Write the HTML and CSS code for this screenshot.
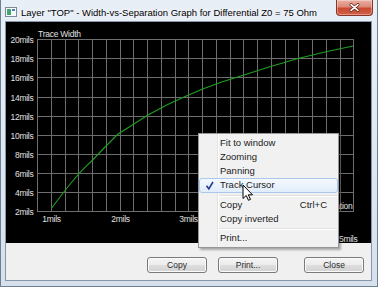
FILE: index.html
```html
<!DOCTYPE html>
<html lang="en">
<head>
    <meta charset="UTF-8">
    <title>Width-vs-Separation Graph</title>
    <link rel="stylesheet" href="styles.css">
</head>
<body>
    <div class="window">
        <!-- Title bar -->
        <div class="titlebar">
            <span class="app-icon">
                <svg width="12" height="10" viewBox="0 0 12 10">
                    <rect x="0.5" y="0.5" width="11" height="9" fill="#fbfcfd" stroke="#7d8a97"/>
                    <rect x="2" y="2" width="4" height="6" fill="#3fa86a"/>
                    <rect x="7" y="2" width="3" height="2" fill="#4a7fd0"/>
                </svg>
            </span>
            <span class="title">Layer "TOP" - Width-vs-Separation Graph for Differential Z0 = 75 Ohm</span>
            <button class="close-btn">
                <svg width="37" height="16" viewBox="0 0 37 16">
                    <path d="M15.5 4.5 L22.5 10.5 M22.5 4.5 L15.5 10.5" stroke="#5a2015" stroke-width="3.2" stroke-linecap="round"/>
                    <path d="M15.5 4.5 L22.5 10.5 M22.5 4.5 L15.5 10.5" stroke="#fff" stroke-width="1.8" stroke-linecap="round"/>
                </svg>
            </button>
        </div>

        <div class="frame-body">
            <div class="client">
                <div class="graph">
                    <svg width="365" height="221" viewBox="6 22 365 221">
                        <path class="grid" d="M37.5 39V212 M51.5 39V212 M65.5 39V212 M78.5 39V212 M92.5 39V212 M106.5 39V212 M120.5 39V212 M133.5 39V212 M147.5 39V212 M161.5 39V212 M175.5 39V212 M188.5 39V212 M202.5 39V212 M216.5 39V212 M230.5 39V212 M243.5 39V212 M257.5 39V212 M271.5 39V212 M285.5 39V212 M298.5 39V212 M312.5 39V212 M326.5 39V212 M340.5 39V212 M353.5 39V212
                            M37 39.5H354 M37 58.5H354 M37 77.5H354 M37 97.5H354 M37 116.5H354 M37 135.5H354 M37 154.5H354 M37 173.5H354 M37 192.5H354 M37 211.5H354"/>
                        <polyline class="curve" points="51.7,208 58.5,199 65.4,190 72.3,181.5 79.2,173.3 86,166.4 92.7,160 105,147 118,134 130,126.5 148,115 166.7,105 185,96.5 203.3,88.7 221.7,82.1 240,76.2 269,67 298,58.5 326,51.8 353,46"/>

                        <text class="axis" x="38" y="37">Trace Width</text>
                        <text class="axis end" x="33.5" y="42.8">20mils</text>
                        <text class="axis end" x="33.5" y="61.8">18mils</text>
                        <text class="axis end" x="33.5" y="80.8">16mils</text>
                        <text class="axis end" x="33.5" y="100.8">14mils</text>
                        <text class="axis end" x="33.5" y="119.8">12mils</text>
                        <text class="axis end" x="33.5" y="138.8">10mils</text>
                        <text class="axis end" x="33.5" y="157.8">8mils</text>
                        <text class="axis end" x="33.5" y="176.8">6mils</text>
                        <text class="axis end" x="33.5" y="195.8">4mils</text>
                        <text class="axis end" x="33.5" y="214.8">2mils</text>

                        <text class="axis mid" x="51.5" y="222">1mils</text>
                        <text class="axis mid" x="120.5" y="222">2mils</text>
                        <text class="axis mid" x="188.5" y="222">3mils</text>
                        <text class="axis mid" x="326.5" y="222">5mils</text>

                        <text class="axis end" x="352.5" y="209">Separation</text>
                        <text class="axis end" x="357.5" y="242">Y: 17.25mils</text>
                    </svg>
                </div>
                <div class="button-bar">
                    <button class="push-btn">Copy</button>
                    <button class="push-btn btn-print">Print...</button>
                    <button class="push-btn">Close</button>
                </div>
            </div>
        </div>

        <!-- Context menu over the graph -->
        <div class="context-menu">
            <div class="menu-item"><span class="check-col"></span><span class="menu-label">Fit to window</span></div>
            <div class="menu-item"><span class="check-col"></span><span class="menu-label">Zooming</span></div>
            <div class="menu-item"><span class="check-col"></span><span class="menu-label">Panning</span></div>
            <div class="menu-item hover">
                <span class="check-col">
                    <svg width="12" height="10" viewBox="0 0 12 10">
                        <path d="M2.5 4.8 L4.8 7.8 L9 1" fill="none" stroke="#1f3b94" stroke-width="1.6"/>
                    </svg>
                </span>
                <span class="menu-label">Track Cursor</span>
            </div>
            <div class="menu-sep"></div>
            <div class="menu-item"><span class="check-col"></span><span class="menu-label">Copy</span><span class="shortcut">Ctrl+C</span></div>
            <div class="menu-item"><span class="check-col"></span><span class="menu-label">Copy inverted</span></div>
            <div class="menu-sep"></div>
            <div class="menu-item"><span class="check-col"></span><span class="menu-label">Print...</span></div>
        </div>

        <svg class="mouse-cursor" width="12" height="18" viewBox="0 0 12 18">
            <path d="M1 1 L1 14.5 L4.2 11.5 L6.5 16.3 L8.5 15.4 L6.3 10.8 L10.5 10.8 Z" fill="#fff" stroke="#000" stroke-width="1" stroke-linejoin="round"/>
        </svg>
    </div>
</body>
</html>
```

FILE: styles.css
```css
body {
    margin: 0;
    padding: 0;
    font-family: "Liberation Sans", Arial, sans-serif;
    background-color: #ffffff;
}

.window {
    position: relative;
    width: 378px;
    height: 287px;
    box-sizing: border-box;
    border: 1px solid #6d7f93;
    border-top: none;
    background: linear-gradient(#e9eff6, #d6e1ed);
    display: flex;
    flex-direction: column;
    overflow: hidden;
}

/* Title bar */
.titlebar {
    height: 21px;
    box-sizing: border-box;
    padding-top: 3px;
    display: flex;
    align-items: center;
}

.app-icon {
    margin-left: 4px;
    display: flex;
}

.title {
    margin-left: 4px;
    font-size: 9.5px;
    color: #000;
    white-space: nowrap;
    text-shadow: 0 0 4px #fff;
}

.close-btn {
    margin-left: auto;
    margin-right: 4px;
    margin-top: -3px;
    align-self: flex-start;
    width: 37px;
    height: 16px;
    padding: 0;
    border: 1px solid #8a3526;
    border-top: none;
    border-radius: 0 0 4px 4px;
    background: linear-gradient(#eab0a2 0%, #dd8a77 45%, #c94a31 55%, #d2614a 100%);
    box-shadow: inset 0 0 0 1px rgba(255, 255, 255, 0.35);
    display: flex;
    box-sizing: border-box;
    overflow: hidden;
}

.close-btn svg {
    margin-left: -1px;
}

/* Window body */
.frame-body {
    flex: 1;
    display: flex;
    padding: 0 5px 5px 4px;
    min-height: 0;
}

.client {
    flex: 1;
    display: flex;
    flex-direction: column;
    border: 1px solid #8796a8;
    background-color: #f0f0f0;
}

.graph {
    height: 221px;
    background-color: #000;
}

.graph svg {
    display: block;
}

.grid {
    stroke: #6e6e6e;
    stroke-width: 1;
    fill: none;
}

.curve {
    fill: none;
    stroke: #1fa01f;
    stroke-width: 1.1;
}

.axis {
    font-family: "Liberation Sans", Arial, sans-serif;
    font-size: 8.5px;
    letter-spacing: -0.25px;
    fill: #e2e2e2;
}

.axis.end {
    text-anchor: end;
}

.axis.mid {
    text-anchor: middle;
}

/* Bottom buttons */
.button-bar {
    flex: 1;
    display: flex;
    justify-content: flex-end;
    align-items: flex-start;
    gap: 11px;
    padding: 14px 7px 0 0;
}

.push-btn {
    width: 60px;
    height: 16px;
    padding: 0;
    font-family: "Liberation Sans", Arial, sans-serif;
    font-size: 8.5px;
    color: #2a2a2a;
    border: 1px solid #7a7a7a;
    border-radius: 3px;
    background: linear-gradient(#f4f4f4 0%, #ececec 48%, #dedede 52%, #d2d2d2 100%);
    box-shadow: inset 0 0 0 1px #fbfbfb;
}

.btn-print {
    margin-right: 15px;
}

/* Context menu */
.context-menu {
    position: absolute;
    left: 197px;
    top: 133px;
    width: 141px;
    box-sizing: border-box;
    padding: 1.5px 0 1px 0;
    border: 1px solid #979797;
    background-color: #f1f1f1;
    background-image: linear-gradient(to right, transparent 18px, #e2e3e3 18px, #e2e3e3 19px, #ffffff 19px, #ffffff 20px, transparent 20px);
    box-shadow: 2px 2px 2px rgba(0, 0, 0, 0.3);
    font-size: 9.5px;
    color: #1b1b1b;
}

.menu-item {
    height: 14.3px;
    line-height: 14.3px;
    display: flex;
    align-items: center;
    box-sizing: border-box;
    padding-right: 10px;
    border: 1px solid transparent;
    border-radius: 3px;
}

.menu-item.hover {
    border-color: #a9c9ec;
    background: linear-gradient(#f5f9fe, #e1edfb);
}

.check-col {
    width: 20px;
    flex-shrink: 0;
    display: flex;
    justify-content: flex-start;
    padding-left: 4px;
    box-sizing: border-box;
}

.menu-label {
    flex: 1;
    white-space: nowrap;
}

.shortcut {
    white-space: nowrap;
}

.menu-sep {
    height: 1px;
    margin: 2px 1px 1px 20px;
    background-color: #e0e0e0;
    border-bottom: 1px solid #ffffff;
}

.mouse-cursor {
    position: absolute;
    left: 241px;
    top: 184px;
}
```
